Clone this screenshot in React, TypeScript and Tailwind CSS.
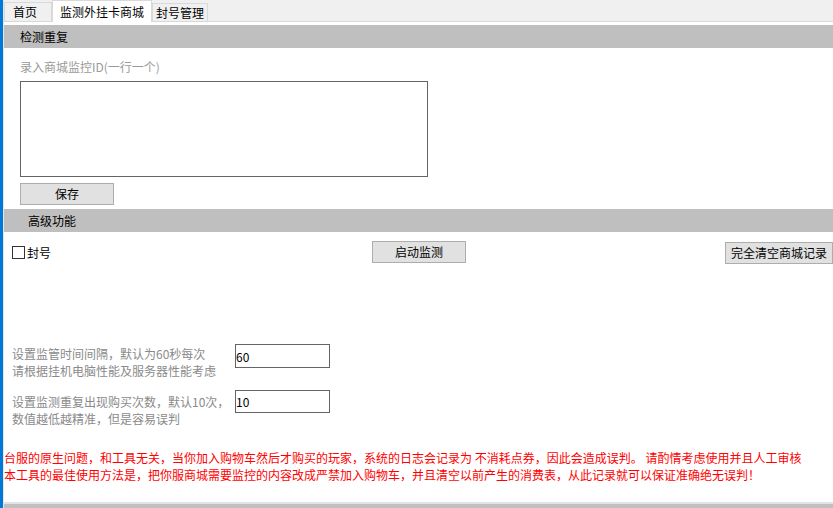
import React from 'react'

// 字体
const font = { fontFamily: '"Noto Sans CJK SC", "Microsoft YaHei", sans-serif' }

function SectionBar({ title, indent }: { title: string; indent: string }) {
  return (
    <div className={`h-[23px] bg-[#bfbfbf] flex items-center text-[12px] text-black ${indent}`}>
      {title}
    </div>
  )
}

function WinButton({ children, className = '' }: { children: React.ReactNode; className?: string }) {
  return (
    <button
      className={`h-[22px] bg-[#e1e1e1] border border-[#adadad] text-[12px] text-black leading-none flex items-center justify-center ${className}`}
    >
      {children}
    </button>
  )
}

export default function App() {
  return (
    <div style={font} className="w-[833px] h-[508px] flex bg-white overflow-hidden text-[12px]">
      {/* 左侧蓝条 */}
      <div className="w-[3px] bg-[#0078d7] shrink-0" />
      <div className="w-[1px] bg-[#e6e6e6] shrink-0" />

      <div className="flex-1 flex flex-col min-w-0">
        {/* 标签栏 */}
        <div className="h-[22px] bg-[#f0f0f0] border-b border-[#dadada] flex items-end shrink-0">
          <div className="h-[20px] mb-[-1px] w-[48px] border border-[#d9d9d9] bg-[#f0f0f0] flex items-center pl-[8px]">
            首页
          </div>
          <div className="h-[22px] mb-[-1px] w-[100px] border border-b-0 border-[#d9d9d9] bg-white flex items-center pl-[7px]">
            监测外挂卡商城
          </div>
          <div className="h-[19px] mb-[-1px] w-[56px] border border-[#d9d9d9] bg-[#f0f0f0] flex items-center pl-[3px]">
            封号管理
          </div>
        </div>

        {/* 检测重复 */}
        <div className="mt-[3px]">
          <SectionBar title="检测重复" indent="pl-[16px]" />
        </div>
        <div className="mt-[10px] ml-[16px] h-[17px] leading-[17px] text-[#9a9a9a]">录入商城监控ID(一行一个)</div>
        <textarea className="mt-[6px] ml-[16px] w-[408px] h-[96px] border border-[#646464] resize-none outline-none shrink-0" />
        <WinButton className="mt-[6px] ml-[16px] w-[94px] shrink-0">保存</WinButton>

        {/* 高级功能 */}
        <div className="mt-[4px]">
          <SectionBar title="高级功能" indent="pl-[24px]" />
        </div>
        <div className="mt-[9px] h-[23px] flex items-start shrink-0">
          <div className="w-[368px] pl-[8px] pt-[3px] flex items-center gap-[2px]">
            <span className="w-[13px] h-[13px] border border-[#333] bg-white inline-block" />
            <span className="leading-[17px]">封号</span>
          </div>
          <WinButton className="w-[94px]">启动监测</WinButton>
          <div className="flex-1" />
          <WinButton className="w-[108px] mt-[1px]">完全清空商城记录</WinButton>
        </div>

        {/* 设置项 */}
        <div className="mt-[80px] h-[46px] flex items-start pl-[8px] shrink-0">
          <div className="w-[223px] pt-[1px] leading-[17px] text-[#8a8a8a]">
            设置监管时间间隔，默认为60秒每次
            <br />
            请根据挂机电脑性能及服务器性能考虑
          </div>
          <input
            defaultValue="60"
            className="w-[95px] h-[24px] border border-[#646464] px-0 text-[12px] outline-none"
          />
        </div>
        <div className="h-[59px] flex items-start pl-[8px] shrink-0">
          <div className="w-[223px] pt-[3px] leading-[17px] text-[#8a8a8a]">
            设置监测重复出现购买次数，默认10次，
            <br />
            数值越低越精准，但是容易误判
          </div>
          <input
            defaultValue="10"
            className="w-[95px] h-[23px] border border-[#646464] px-0 text-[12px] outline-none"
          />
        </div>

        {/* 提示 */}
        <div className="leading-[17px] text-[#ff0000] whitespace-nowrap">
          台服的原生问题，和工具无关，当你加入购物车然后才购买的玩家，系统的日志会记录为 不消耗点券，因此会造成误判。 请酌情考虑使用并且人工审核
          <br />
          本工具的最佳使用方法是，把你服商城需要监控的内容改成严禁加入购物车，并且清空以前产生的消费表，从此记录就可以保证准确绝无误判！
        </div>

        <div className="flex-1" />
        <div className="h-[2px] bg-[#e3e3e3] shrink-0" />
        <div className="h-[4px] bg-[#c0c0c0] shrink-0" />
      </div>
    </div>
  )
}
